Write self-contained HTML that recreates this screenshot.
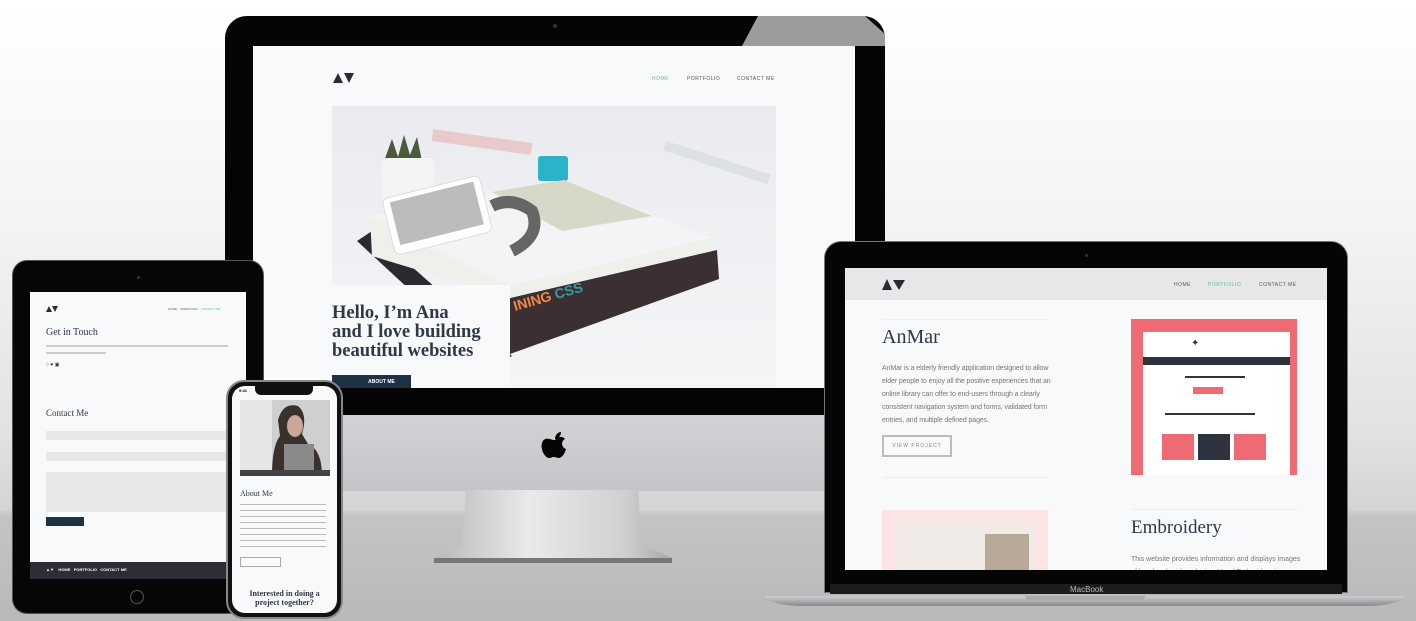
<!DOCTYPE html>
<html><head><meta charset="utf-8"><style>
*{margin:0;padding:0;box-sizing:border-box}
body{width:1416px;height:621px;overflow:hidden;position:relative;font-family:"Liberation Sans",sans-serif;
background:linear-gradient(180deg,#fff 0%,#f4f4f4 35%,#e2e2e2 70%,#d4d4d4 82%,#c4c4c4 83%,#b9b9b9 100%)}
.a{position:absolute}
.serif{font-family:"Liberation Serif",serif;color:#2e3848}
.nav{font-size:5px;letter-spacing:.5px;color:#555}
</style></head><body>

<!-- iMac -->
<div class="a" style="left:225px;top:16px;width:660px;height:400px;background:#050505;border-radius:22px 22px 0 0"></div>
<svg class="a" style="left:225px;top:16px" width="660" height="40"><polygon points="533,0 640,0 660,18 660,30 517,30" fill="#9c9c9c"/></svg>
<div class="a" style="left:553px;top:24px;width:4px;height:4px;border-radius:50%;background:#333"></div>
<div class="a" style="left:253px;top:46px;width:602px;height:342px;background:#f8f9fa"></div>
<div class="a" style="left:225px;top:415px;width:660px;height:76px;background:linear-gradient(180deg,#d2d3d6,#c4c5c8);border-radius:0 0 10px 10px"></div>
<svg class="a" style="left:538px;top:430px" width="34" height="40" viewBox="0 0 34 40"><path d="M17 10c3-4 8-4 10-1-4 2-4 8 1 10-1 4-4 9-7 9-2 0-3-1-5-1s-3 1-5 1c-4 0-9-9-7-15 1-4 5-5 7-4 2 0 3 1 5 1z M17 9c0-4 3-7 6-7 0 4-3 7-6 7z" fill="#050505"/></svg>
<svg class="a" style="left:430px;top:490px" width="250" height="80"><defs><linearGradient id="st" x1="0" x2="1"><stop offset="0" stop-color="#b8b8b8"/><stop offset=".4" stop-color="#eaeaea"/><stop offset=".8" stop-color="#d0d0d0"/><stop offset="1" stop-color="#a8a8a8"/></linearGradient></defs><polygon points="36,0 208,0 212,55 242,68 4,68 32,55" fill="url(#st)"/><rect x="4" y="68" width="238" height="5" fill="#777"/></svg>

<!-- iMac screen content -->
<svg class="a" style="left:333px;top:73px" width="22" height="10"><polygon points="0,10 5,0 10,10" fill="#2b2b35"/><polygon points="11,0 21,0 16,10" fill="#2b2b35"/></svg>
<div class="a nav" style="left:652px;top:76px;color:#5bbf9a">HOME</div>
<div class="a nav" style="left:687px;top:76px">PORTFOLIO</div>
<div class="a nav" style="left:737px;top:76px">CONTACT ME</div>
<svg class="a" style="left:332px;top:106px" width="444" height="282" viewBox="0 0 444 282">
<defs><linearGradient id="bg" x1="0" y1="0" x2="0" y2="1"><stop offset="0" stop-color="#e9ebef"/><stop offset="1" stop-color="#f4f5f7"/></linearGradient></defs>
<rect width="444" height="282" fill="url(#bg)"/>
<rect x="100" y="30" width="100" height="12" fill="#e8b4b0" opacity=".6" transform="rotate(8 150 36)"/>
<rect x="330" y="50" width="110" height="10" fill="#dde0e4" transform="rotate(18 380 55)"/>
<path d="M52 55 l8-22 6 18 6-22 6 20 7-18 5 24z" fill="#4a5a3a"/>
<rect x="50" y="52" width="52" height="48" rx="4" fill="#f4f4f4"/>
<rect x="206" y="50" width="30" height="25" rx="3" fill="#2bb3c9"/>
<polygon points="25,135 40,125 180,250 160,260" fill="#2a2a30"/>
<polygon points="178,192 385,144 387,173 178,248" fill="#3b2f31"/>
<polygon points="38,110 232,74 380,132 380,144 178,192 40,150" fill="#eef0ec"/>
<polygon points="38,110 232,74 380,132 178,180" fill="#f2f4f5"/>
<polygon points="160,86 232,74 320,110 230,125" fill="#d6d8c8"/>
<path d="M160 100 q20 -10 40 5 q10 25 -20 40" stroke="#666" stroke-width="12" fill="none"/>
<text x="183" y="205" font-size="14" font-weight="bold" fill="#ef8a4a" transform="rotate(-16 183 205)">INING <tspan fill="#3a9aa8">CSS</tspan></text>
<g transform="rotate(-14 90 110)"><rect x="55" y="84" width="100" height="58" rx="6" fill="#fff" stroke="#ddd"/><rect x="62" y="89" width="86" height="44" fill="#bcbcbc"/></g>
</svg>
<div class="a" style="left:332px;top:285px;width:178px;height:103px;background:#f8f9fa"></div>
<div class="a serif" style="left:332px;top:304px;font-size:18.5px;line-height:19px;font-weight:bold">Hello, I’m Ana<br>and I love building<br>beautiful websites</div>
<div class="a" style="left:332px;top:375px;width:79px;height:13px;background:#1f3145;color:#fff;font-size:5px;font-weight:bold;text-align:center;line-height:14px;padding-left:20px">ABOUT ME</div>

<!-- iPad -->
<div class="a" style="left:13px;top:261px;width:250px;height:352px;background:#060606;border-radius:14px;box-shadow:0 0 0 1px #555"></div>
<div class="a" style="left:137px;top:276px;width:3px;height:3px;border-radius:50%;background:#333"></div>
<div class="a" style="left:130px;top:590px;width:14px;height:14px;border-radius:50%;border:1px solid #555"></div>
<div class="a" style="left:30px;top:292px;width:216px;height:287px;background:#f8f9fa"></div>
<svg class="a" style="left:46px;top:306px" width="12" height="6"><polygon points="0,6 3,0 6,6" fill="#2b2b35"/><polygon points="6,0 12,0 9,6" fill="#2b2b35"/></svg>
<div class="a" style="left:168px;top:307px;font-size:3px;color:#555">HOME &nbsp;&nbsp; PORTFOLIO &nbsp;&nbsp; <span style="color:#5bbf9a">CONTACT ME</span></div>
<div class="a serif" style="left:46px;top:327px;font-size:10px">Get in Touch</div>
<div class="a" style="left:46px;top:345px;width:182px;height:2px;background:#ccc"></div>
<div class="a" style="left:46px;top:352px;width:60px;height:2px;background:#ccc"></div>
<div class="a" style="left:46px;top:362px;font-size:5px;color:#333">○ ♥ ▣</div>
<div class="a serif" style="left:46px;top:408px;font-size:9px">Contact Me</div>
<div class="a" style="left:46px;top:431px;width:180px;height:9px;background:#e6e7e9"></div>
<div class="a" style="left:46px;top:452px;width:180px;height:9px;background:#e6e7e9"></div>
<div class="a" style="left:46px;top:472px;width:180px;height:40px;background:#e6e7e9"></div>
<div class="a" style="left:46px;top:517px;width:38px;height:9px;background:#1f3145"></div>
<div class="a" style="left:30px;top:562px;width:216px;height:17px;background:#2d2d38"></div>
<div class="a" style="left:46px;top:567px;font-size:4px;color:#fff;font-weight:bold">▲▼ &nbsp;&nbsp; HOME &nbsp; PORTFOLIO &nbsp; CONTACT ME</div>

<!-- iPhone -->
<div class="a" style="left:226px;top:380px;width:117px;height:239px;background:#111;border-radius:18px;border:2px solid #888"></div>
<div class="a" style="left:232px;top:386px;width:105px;height:227px;background:#f8f9fa;border-radius:13px"></div>
<div class="a" style="left:255px;top:386px;width:58px;height:9px;background:#111;border-radius:0 0 6px 6px"></div>
<div class="a" style="left:239px;top:388px;font-size:4px;font-weight:bold">9:41</div>
<svg class="a" style="left:240px;top:400px" width="90" height="76" viewBox="0 0 90 76"><rect width="90" height="76" fill="#cfcfcf"/><rect x="0" y="0" width="32" height="76" fill="#e6e6e6"/><path d="M38 20 q5-18 20-14 q10 8 4 28 l6 10 q14 6 14 32 l-50 0 q0-30 8-40z" fill="#3a302c"/><ellipse cx="55" cy="26" rx="8" ry="11" fill="#c9a898"/><rect x="44" y="44" width="30" height="32" fill="#8a8a8a"/><rect x="0" y="70" width="90" height="6" fill="#444"/></svg>
<div class="a serif" style="left:240px;top:489px;font-size:8px">About Me</div>
<div class="a" style="left:240px;top:504px;width:86px;height:44px;background:repeating-linear-gradient(180deg,#bbb 0 1px,transparent 1px 6px)"></div>
<div class="a" style="left:240px;top:557px;width:41px;height:10px;border:1px solid #aaa"></div>
<div class="a serif" style="left:232px;top:589px;width:105px;text-align:center;font-size:8px;line-height:9px;font-weight:bold">Interested in doing a<br>project together?</div>

<!-- MacBook -->
<div class="a" style="left:825px;top:242px;width:522px;height:350px;background:#050505;border-radius:16px 16px 0 0;box-shadow:0 0 0 1px #777"></div>
<div class="a" style="left:1085px;top:254px;width:3px;height:3px;border-radius:50%;background:#333"></div>
<div class="a" style="left:830px;top:584px;width:512px;height:10px;background:#1c1c1e"></div>
<div class="a" style="left:1070px;top:585px;font-size:8px;color:#bbb">MacBook</div>
<div class="a" style="left:765px;top:596px;width:640px;height:10px;background:linear-gradient(180deg,#cfcfd2,#8a8a8e);border-radius:0 0 40px 40px/0 0 10px 10px"></div>
<div class="a" style="left:1025px;top:596px;width:120px;height:4px;background:#aaa;border-radius:0 0 4px 4px"></div>
<div class="a" style="left:845px;top:268px;width:482px;height:302px;background:#f8f9fa;overflow:hidden">
 <div class="a" style="left:0;top:0;width:482px;height:32px;background:#e7e7e9"></div>
 <svg class="a" style="left:37px;top:11px" width="24" height="11"><polygon points="0,11 5,0 10,11" fill="#2b2b35"/><polygon points="11,1 23,1 17,11" fill="#2b2b35"/></svg>
 <div class="a nav" style="left:329px;top:14px">HOME</div>
 <div class="a nav" style="left:363px;top:14px;color:#5bbf9a">PORTFOLIO</div>
 <div class="a nav" style="left:414px;top:14px">CONTACT ME</div>
 <div class="a" style="left:37px;top:51px;width:166px;height:1px;background:#eee"></div>
 <div class="a serif" style="left:37px;top:58px;font-size:20px">AnMar</div>
 <div class="a" style="left:37px;top:94px;font-size:7px;color:#777;line-height:13px;width:172px;letter-spacing:-.1px">AnMar is a elderly friendly application designed to allow elder people to enjoy all the positive experiences that an online library can offer to end-users through a clearly consistent navigation system and forms, validated form entries, and multiple defined pages.</div>
 <div class="a" style="left:37px;top:167px;width:70px;height:22px;border:2px solid #bbb;font-size:5px;color:#888;text-align:center;line-height:18px;letter-spacing:1px">VIEW PROJECT</div>
 <div class="a" style="left:37px;top:209px;width:166px;height:1px;background:#eee"></div>
 <div class="a" style="left:286px;top:51px;width:166px;height:156px;background:#ef6b73"></div>
 <div class="a" style="left:298px;top:64px;width:147px;height:143px;background:#fff"></div>
 <div class="a" style="left:346px;top:70px;font-size:10px;color:#333">✦</div>
 <div class="a" style="left:298px;top:89px;width:147px;height:8px;background:#2d3440"></div>
 <div class="a" style="left:340px;top:108px;width:60px;height:2px;background:#333"></div>
 <div class="a" style="left:348px;top:119px;width:30px;height:7px;background:#ef6b73"></div>
 <div class="a" style="left:320px;top:145px;width:90px;height:2px;background:#333"></div>
 <div class="a" style="left:317px;top:166px;width:32px;height:26px;background:#ef6b73"></div>
 <div class="a" style="left:353px;top:166px;width:32px;height:26px;background:#2d3440"></div>
 <div class="a" style="left:389px;top:166px;width:32px;height:26px;background:#ef6b73"></div>
 <div class="a" style="left:37px;top:242px;width:166px;height:60px;background:#fde4e4"></div>
 <div class="a" style="left:50px;top:254px;width:140px;height:48px;background:#f0ebe7"></div>
 <div class="a" style="left:140px;top:266px;width:44px;height:36px;background:#b8a897"></div>
 <div class="a" style="left:286px;top:241px;width:166px;height:1px;background:#eee"></div>
 <div class="a serif" style="left:286px;top:249px;font-size:19px">Embroidery</div>
 <div class="a" style="left:286px;top:285px;font-size:7px;color:#777;line-height:13px;width:172px">This website provides information and displays images of hand embroidery design. Hand Embroidery is a</div>
</div>
</body></html>
